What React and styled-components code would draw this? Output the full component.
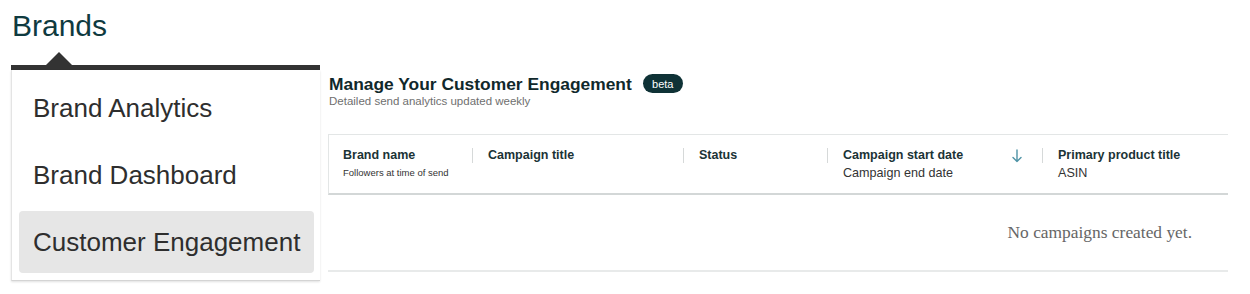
import React from "react";
import styled, { createGlobalStyle } from "styled-components";

const GlobalStyle = createGlobalStyle`
  body {
    margin: 0;
    background: #fff;
    font-family: "Liberation Sans", Arial, sans-serif;
  }
`;

const Page = styled.div`
  width: 1250px;
  height: 294px;
  overflow: hidden;
`;

const Heading = styled.h1`
  margin: 0;
  padding: 9px 0 0 12px;
  font-size: 30px;
  line-height: 33px;
  font-weight: 400;
  color: #0f3a40;
`;

const Row = styled.div`
  display: flex;
  align-items: flex-start;
`;

const Menu = styled.div`
  margin: 10px 0 0 11px;
  width: 309px;
  display: flex;
  flex-direction: column;
`;

const Caret = styled.div`
  width: 0;
  height: 0;
  margin-left: 35px;
  border-left: 13px solid transparent;
  border-right: 13px solid transparent;
  border-bottom: 13px solid #333;
`;

const MenuBar = styled.div`
  height: 5px;
  background: #333;
`;

const MenuPanel = styled.ul`
  list-style: none;
  margin: 0;
  padding: 7px 6px 7px 7px;
  display: flex;
  flex-direction: column;
  gap: 5px;
  background: #fff;
  border-left: 1px solid #e4e4e4;
  border-bottom: 1px solid #d4d4d4;
  box-shadow: 0 1px 2px rgba(0, 0, 0, 0.12);
`;

const MenuItem = styled.li`
  height: 62px;
  display: flex;
  align-items: center;
  padding-left: 14px;
  border-radius: 4px;
  font-size: 26px;
  color: #2e2e2e;
  background: ${(p) => (p.$active ? "#e6e6e6" : "transparent")};
`;

const Content = styled.section`
  margin: 32px 0 0 8px;
  width: 900px;
`;

const TitleRow = styled.div`
  display: flex;
  align-items: center;
  gap: 11px;
  height: 19px;
  padding-left: 1px;
`;

const Title = styled.h2`
  margin: 0;
  font-size: 17.4px;
  line-height: 22px;
  font-weight: 700;
  color: #10282b;
`;

const Badge = styled.span`
  display: inline-flex;
  align-items: center;
  justify-content: center;
  width: 40px;
  height: 19px;
  border-radius: 10px;
  background: #0f3236;
  color: #fff;
  font-size: 11px;
`;

const Subtitle = styled.div`
  margin-top: 2px;
  padding-left: 1px;
  font-size: 11.5px;
  line-height: 13px;
  color: #6f6f6f;
`;

const Table = styled.div`
  margin-top: 26px;
`;

const HeaderCard = styled.div`
  display: flex;
  align-items: flex-start;
  padding: 13px 0 13px 0;
  border: 1px solid #e3e6e6;
  border-right: none;
  border-bottom: 2px solid #d3d7d7;
  background: #fff;
`;

const Col = styled.div`
  width: ${(p) => p.$w}px;
  padding-left: ${(p) => p.$pl}px;
  display: flex;
  align-items: flex-start;
  box-sizing: border-box;
`;

const ColText = styled.div`
  flex: 1;
`;

const Divider = styled.div`
  width: 1px;
  height: 15px;
  background: #d6d9d9;
`;

const Label = styled.div`
  font-size: 12.5px;
  line-height: 14px;
  font-weight: 700;
  color: #1b3336;
`;

const SubLabel = styled.div`
  margin-top: 4px;
  font-size: ${(p) => (p.$small ? 9.5 : 12.6)}px;
  line-height: 14px;
  color: #333;
`;

const SortIcon = styled.svg`
  width: 10px;
  height: 14px;
  margin: 1px 20px 0 0;
`;

const EmptyRow = styled.div`
  height: 75px;
  display: flex;
  align-items: center;
  justify-content: flex-end;
  padding-right: 36px;
  border-bottom: 2px solid #e8eaea;
  font-family: "Liberation Serif", "Times New Roman", serif;
  font-size: 17.4px;
  color: #666;
`;

const columns = [
  { w: 143, title: "Brand name", sub: "Followers at time of send", small: true },
  { w: 211, title: "Campaign title" },
  { w: 144, title: "Status" },
  { w: 215, title: "Campaign start date", sub: "Campaign end date", sort: true },
  { w: 186, title: "Primary product title", sub: "ASIN" },
];

export default function App() {
  return (
    <Page>
      <GlobalStyle />
      <Heading>Brands</Heading>
      <Row>
        <Menu>
          <Caret />
          <MenuBar />
          <MenuPanel>
            <MenuItem>Brand Analytics</MenuItem>
            <MenuItem>Brand Dashboard</MenuItem>
            <MenuItem $active>Customer Engagement</MenuItem>
          </MenuPanel>
        </Menu>
        <Content>
          <TitleRow>
            <Title>Manage Your Customer Engagement</Title>
            <Badge>beta</Badge>
          </TitleRow>
          <Subtitle>Detailed send analytics updated weekly</Subtitle>
          <Table>
            <HeaderCard>
              {columns.map((c, i) => (
                <React.Fragment key={c.title}>
                  {i > 0 && <Divider />}
                  <Col $w={i === 0 ? c.w : c.w - 1} $pl={i === 0 ? 14 : 15}>
                    <ColText>
                      <Label>{c.title}</Label>
                      {c.sub && <SubLabel $small={c.small}>{c.sub}</SubLabel>}
                    </ColText>
                    {c.sort && (
                      <SortIcon viewBox="0 0 10 14" fill="none" stroke="#4f93a6" strokeWidth="1.4" strokeLinecap="round" strokeLinejoin="round">
                        <path d="M5 1v11.5M1 8.5l4 4 4-4" />
                      </SortIcon>
                    )}
                  </Col>
                </React.Fragment>
              ))}
            </HeaderCard>
            <EmptyRow>No campaigns created yet.</EmptyRow>
          </Table>
        </Content>
      </Row>
    </Page>
  );
}
